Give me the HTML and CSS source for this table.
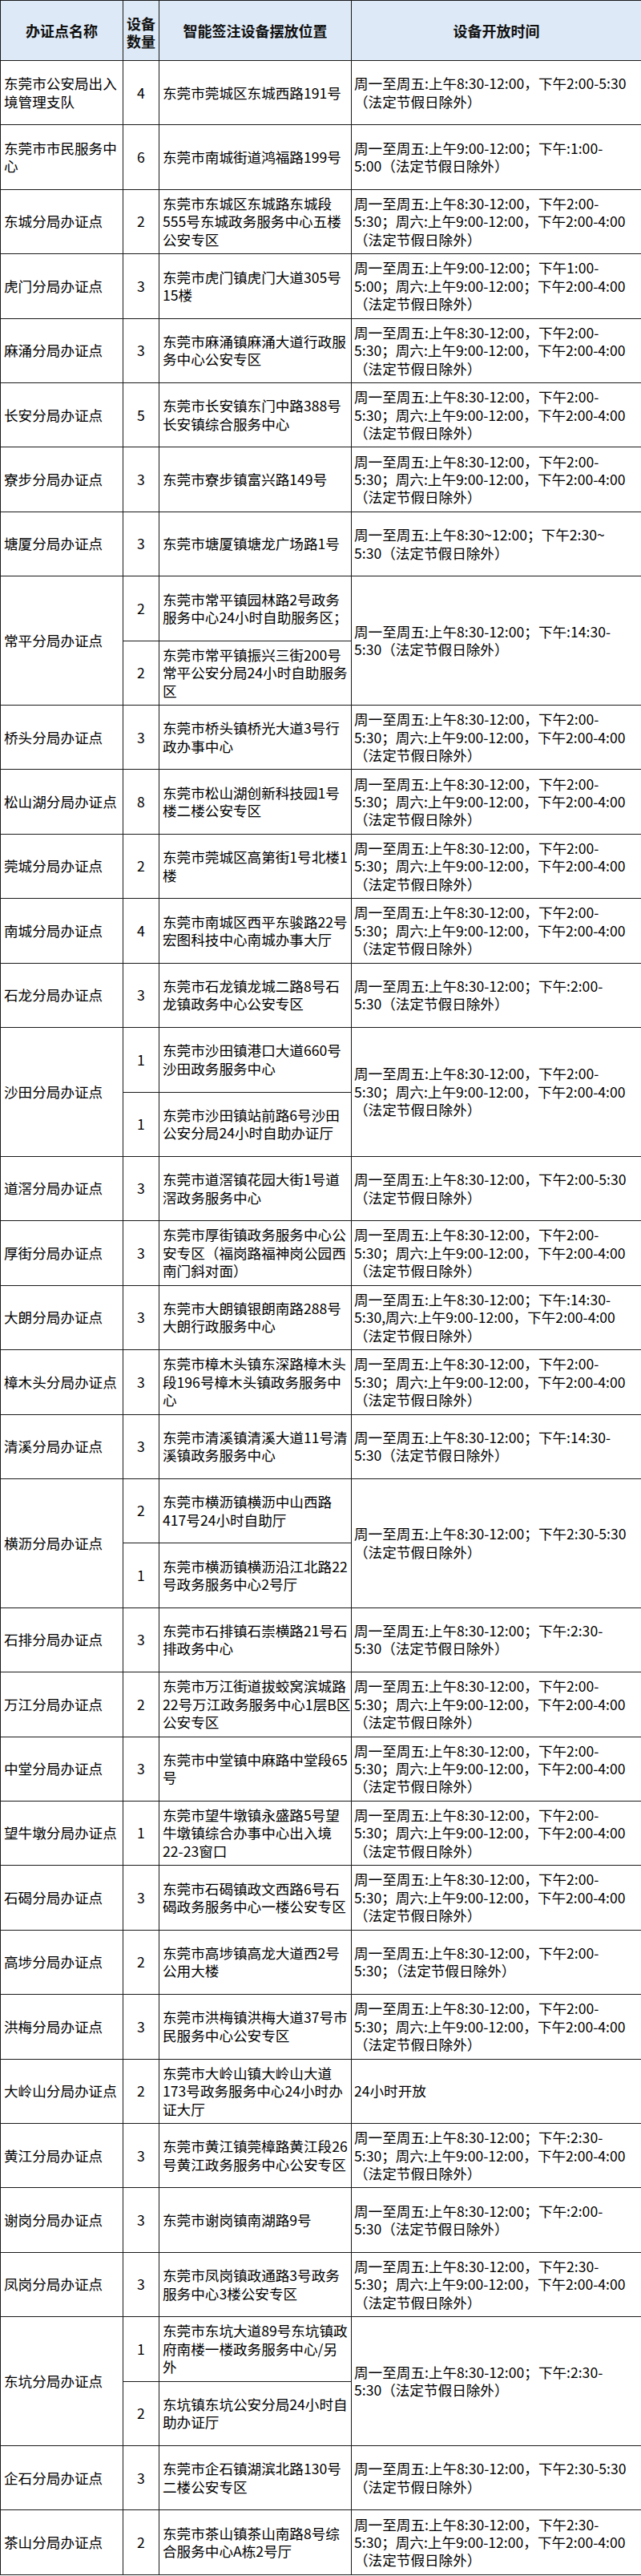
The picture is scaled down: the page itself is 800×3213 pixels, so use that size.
FILE: index.html
```html
<!DOCTYPE html>
<html lang="zh-CN">
<head>
<meta charset="utf-8">
<title>智能签注设备摆放位置</title>
<link rel="stylesheet" href="styles.css">
</head>
<body>
<table class="tbl">
<colgroup>
<col class="c1"><col class="c2"><col class="c3"><col class="c4">
</colgroup>
<thead>
<tr>
<th>办证点名称</th>
<th class="hnum">设备<br>数量</th>
<th>智能签注设备摆放位置</th>
<th>设备开放时间</th>
</tr>
</thead>
<tbody>
<tr><td class="name">东莞市公安局出入<br>境管理支队</td><td class="num">4</td><td class="addr">东莞市莞城区东城西路191号</td><td class="time">周一至周五:上午8:30-12:00，下午2:00-5:30<br>（法定节假日除外）</td></tr>
<tr><td class="name">东莞市市民服务中<br>心</td><td class="num">6</td><td class="addr">东莞市南城街道鸿福路199号</td><td class="time">周一至周五:上午9:00-12:00；下午:1:00-<br>5:00（法定节假日除外）</td></tr>
<tr><td class="name">东城分局办证点</td><td class="num">2</td><td class="addr">东莞市东城区东城路东城段<br>555号东城政务服务中心五楼<br>公安专区</td><td class="time">周一至周五:上午8:30-12:00，下午2:00-<br>5:30；周六:上午9:00-12:00，下午2:00-4:00<br>（法定节假日除外）</td></tr>
<tr><td class="name">虎门分局办证点</td><td class="num">3</td><td class="addr">东莞市虎门镇虎门大道305号<br>15楼</td><td class="time">周一至周五:上午9:00-12:00；下午1:00-<br>5:00；周六:上午9:00-12:00；下午2:00-4:00<br>（法定节假日除外）</td></tr>
<tr><td class="name">麻涌分局办证点</td><td class="num">3</td><td class="addr">东莞市麻涌镇麻涌大道行政服<br>务中心公安专区</td><td class="time">周一至周五:上午8:30-12:00，下午2:00-<br>5:30；周六:上午9:00-12:00，下午2:00-4:00<br>（法定节假日除外）</td></tr>
<tr><td class="name">长安分局办证点</td><td class="num">5</td><td class="addr">东莞市长安镇东门中路388号<br>长安镇综合服务中心</td><td class="time">周一至周五:上午8:30-12:00，下午2:00-<br>5:30；周六:上午9:00-12:00，下午2:00-4:00<br>（法定节假日除外）</td></tr>
<tr><td class="name">寮步分局办证点</td><td class="num">3</td><td class="addr">东莞市寮步镇富兴路149号</td><td class="time">周一至周五:上午8:30-12:00，下午2:00-<br>5:30；周六:上午9:00-12:00，下午2:00-4:00<br>（法定节假日除外）</td></tr>
<tr><td class="name">塘厦分局办证点</td><td class="num">3</td><td class="addr">东莞市塘厦镇塘龙广场路1号</td><td class="time">周一至周五:上午8:30~12:00；下午2:30~<br>5:30（法定节假日除外）</td></tr>
<tr><td class="name" rowspan="2">常平分局办证点</td><td class="num">2</td><td class="addr">东莞市常平镇园林路2号政务<br>服务中心24小时自助服务区；</td><td class="time" rowspan="2">周一至周五:上午8:30-12:00；下午:14:30-<br>5:30（法定节假日除外）</td></tr>
<tr><td class="num">2</td><td class="addr">东莞市常平镇振兴三街200号<br>常平公安分局24小时自助服务<br>区</td></tr>
<tr><td class="name">桥头分局办证点</td><td class="num">3</td><td class="addr">东莞市桥头镇桥光大道3号行<br>政办事中心</td><td class="time">周一至周五:上午8:30-12:00，下午2:00-<br>5:30；周六:上午9:00-12:00，下午2:00-4:00<br>（法定节假日除外）</td></tr>
<tr><td class="name">松山湖分局办证点</td><td class="num">8</td><td class="addr">东莞市松山湖创新科技园1号<br>楼二楼公安专区</td><td class="time">周一至周五:上午8:30-12:00，下午2:00-<br>5:30；周六:上午9:00-12:00，下午2:00-4:00<br>（法定节假日除外）</td></tr>
<tr><td class="name">莞城分局办证点</td><td class="num">2</td><td class="addr">东莞市莞城区高第街1号北楼1<br>楼</td><td class="time">周一至周五:上午8:30-12:00，下午2:00-<br>5:30；周六:上午9:00-12:00，下午2:00-4:00<br>（法定节假日除外）</td></tr>
<tr><td class="name">南城分局办证点</td><td class="num">4</td><td class="addr">东莞市南城区西平东骏路22号<br>宏图科技中心南城办事大厅</td><td class="time">周一至周五:上午8:30-12:00，下午2:00-<br>5:30；周六:上午9:00-12:00，下午2:00-4:00<br>（法定节假日除外）</td></tr>
<tr><td class="name">石龙分局办证点</td><td class="num">3</td><td class="addr">东莞市石龙镇龙城二路8号石<br>龙镇政务中心公安专区</td><td class="time">周一至周五:上午8:30-12:00；下午:2:00-<br>5:30（法定节假日除外）</td></tr>
<tr><td class="name" rowspan="2">沙田分局办证点</td><td class="num">1</td><td class="addr">东莞市沙田镇港口大道660号<br>沙田政务服务中心</td><td class="time" rowspan="2">周一至周五:上午8:30-12:00，下午2:00-<br>5:30；周六:上午9:00-12:00，下午2:00-4:00<br>（法定节假日除外）</td></tr>
<tr><td class="num">1</td><td class="addr">东莞市沙田镇站前路6号沙田<br>公安分局24小时自助办证厅</td></tr>
<tr><td class="name">道滘分局办证点</td><td class="num">3</td><td class="addr">东莞市道滘镇花园大街1号道<br>滘政务服务中心</td><td class="time">周一至周五:上午8:30-12:00，下午2:00-5:30<br>（法定节假日除外）</td></tr>
<tr><td class="name">厚街分局办证点</td><td class="num">3</td><td class="addr">东莞市厚街镇政务服务中心公<br>安专区（福岗路福神岗公园西<br>南门斜对面）</td><td class="time">周一至周五:上午8:30-12:00，下午2:00-<br>5:30；周六:上午9:00-12:00，下午2:00-4:00<br>（法定节假日除外）</td></tr>
<tr><td class="name">大朗分局办证点</td><td class="num">3</td><td class="addr">东莞市大朗镇银朗南路288号<br>大朗行政服务中心</td><td class="time">周一至周五:上午8:30-12:00；下午:14:30-<br>5:30,周六:上午9:00-12:00，下午2:00-4:00<br>（法定节假日除外）</td></tr>
<tr><td class="name">樟木头分局办证点</td><td class="num">3</td><td class="addr">东莞市樟木头镇东深路樟木头<br>段196号樟木头镇政务服务中<br>心</td><td class="time">周一至周五:上午8:30-12:00，下午2:00-<br>5:30；周六:上午9:00-12:00，下午2:00-4:00<br>（法定节假日除外）</td></tr>
<tr><td class="name">清溪分局办证点</td><td class="num">3</td><td class="addr">东莞市清溪镇清溪大道11号清<br>溪镇政务服务中心</td><td class="time">周一至周五:上午8:30-12:00；下午:14:30-<br>5:30（法定节假日除外）</td></tr>
<tr><td class="name" rowspan="2">横沥分局办证点</td><td class="num">2</td><td class="addr">东莞市横沥镇横沥中山西路<br>417号24小时自助厅</td><td class="time" rowspan="2">周一至周五:上午8:30-12:00；下午2:30-5:30<br>（法定节假日除外）</td></tr>
<tr><td class="num">1</td><td class="addr">东莞市横沥镇横沥沿江北路22<br>号政务服务中心2号厅</td></tr>
<tr><td class="name">石排分局办证点</td><td class="num">3</td><td class="addr">东莞市石排镇石崇横路21号石<br>排政务中心</td><td class="time">周一至周五:上午8:30-12:00；下午:2:30-<br>5:30（法定节假日除外）</td></tr>
<tr><td class="name">万江分局办证点</td><td class="num">2</td><td class="addr">东莞市万江街道拔蛟窝滨城路<br>22号万江政务服务中心1层B区<br>公安专区</td><td class="time">周一至周五:上午8:30-12:00，下午2:00-<br>5:30；周六:上午9:00-12:00，下午2:00-4:00<br>（法定节假日除外）</td></tr>
<tr><td class="name">中堂分局办证点</td><td class="num">3</td><td class="addr">东莞市中堂镇中麻路中堂段65<br>号</td><td class="time">周一至周五:上午8:30-12:00，下午2:00-<br>5:30；周六:上午9:00-12:00，下午2:00-4:00<br>（法定节假日除外）</td></tr>
<tr><td class="name">望牛墩分局办证点</td><td class="num">1</td><td class="addr">东莞市望牛墩镇永盛路5号望<br>牛墩镇综合办事中心出入境<br>22-23窗口</td><td class="time">周一至周五:上午8:30-12:00，下午2:00-<br>5:30；周六:上午9:00-12:00，下午2:00-4:00<br>（法定节假日除外）</td></tr>
<tr><td class="name">石碣分局办证点</td><td class="num">3</td><td class="addr">东莞市石碣镇政文西路6号石<br>碣政务服务中心一楼公安专区</td><td class="time">周一至周五:上午8:30-12:00，下午2:00-<br>5:30；周六:上午9:00-12:00，下午2:00-4:00<br>（法定节假日除外）</td></tr>
<tr><td class="name">高埗分局办证点</td><td class="num">2</td><td class="addr">东莞市高埗镇高龙大道西2号<br>公用大楼</td><td class="time">周一至周五:上午8:30-12:00，下午2:00-<br>5:30；（法定节假日除外）</td></tr>
<tr><td class="name">洪梅分局办证点</td><td class="num">3</td><td class="addr">东莞市洪梅镇洪梅大道37号市<br>民服务中心公安专区</td><td class="time">周一至周五:上午8:30-12:00，下午2:00-<br>5:30；周六:上午9:00-12:00，下午2:00-4:00<br>（法定节假日除外）</td></tr>
<tr><td class="name">大岭山分局办证点</td><td class="num">2</td><td class="addr">东莞市大岭山镇大岭山大道<br>173号政务服务中心24小时办<br>证大厅</td><td class="time">24小时开放</td></tr>
<tr><td class="name">黄江分局办证点</td><td class="num">3</td><td class="addr">东莞市黄江镇莞樟路黄江段26<br>号黄江政务服务中心公安专区</td><td class="time">周一至周五:上午8:30-12:00；下午:2:30-<br>5:30；周六:上午9:00-12:00，下午2:00-4:00<br>（法定节假日除外）</td></tr>
<tr><td class="name">谢岗分局办证点</td><td class="num">3</td><td class="addr">东莞市谢岗镇南湖路9号</td><td class="time">周一至周五:上午8:30-12:00；下午:2:00-<br>5:30（法定节假日除外）</td></tr>
<tr><td class="name">凤岗分局办证点</td><td class="num">3</td><td class="addr">东莞市凤岗镇政通路3号政务<br>服务中心3楼公安专区</td><td class="time">周一至周五:上午8:30-12:00，下午2:30-<br>5:30；周六:上午9:00-12:00，下午2:00-4:00<br>（法定节假日除外）</td></tr>
<tr><td class="name" rowspan="2">东坑分局办证点</td><td class="num">1</td><td class="addr">东莞市东坑大道89号东坑镇政<br>府南楼一楼政务服务中心/另<br>外</td><td class="time" rowspan="2">周一至周五:上午8:30-12:00；下午:2:30-<br>5:30（法定节假日除外）</td></tr>
<tr><td class="num">2</td><td class="addr">东坑镇东坑公安分局24小时自<br>助办证厅</td></tr>
<tr><td class="name">企石分局办证点</td><td class="num">3</td><td class="addr">东莞市企石镇湖滨北路130号<br>二楼公安专区</td><td class="time">周一至周五:上午8:30-12:00，下午2:30-5:30<br>（法定节假日除外）</td></tr>
<tr><td class="name">茶山分局办证点</td><td class="num">2</td><td class="addr">东莞市茶山镇茶山南路8号综<br>合服务中心A栋2号厅</td><td class="time">周一至周五:上午8:30-12:00，下午2:30-<br>5:30；周六:上午9:00-12:00，下午2:00-4:00<br>（法定节假日除外）</td></tr>
</tbody>
</table>
</body>
</html>
```
FILE: styles.css
```css
html, body {
  margin: 0;
  padding: 0;
  background: #ffffff;
}

.tbl {
  width: 800px;
  border-collapse: collapse;
  table-layout: fixed;
  font-family: "Liberation Sans Narrow", "Noto Sans CJK SC", sans-serif;
  font-size: 17.6px;
  line-height: 22.4px;
  color: #000000;
}

.c1 { width: 153px; }
.c2 { width: 45px; }
.c3 { width: 240px; }
.c4 { width: 362px; }

.tbl th,
.tbl td {
  border: 1px solid #1a1a1a;
  padding: 0 2px 0 4px;
  vertical-align: middle;
  white-space: nowrap;
  overflow: hidden;
}

.tbl thead tr {
  height: 75px;
}

.tbl th {
  background: #dde9f6;
  font-family: "Noto Sans CJK SC", sans-serif;
  font-weight: bold;
  font-size: 18px;
  text-align: center;
  color: #111111;
  padding: 0;
}

.tbl .hnum {
  line-height: 22.5px;
  padding-top: 4px;
}

.tbl tbody tr {
  height: 80.41px;
}

.tbl .name {
  padding-left: 4px;
  text-align: left;
}

.tbl .num {
  text-align: center;
  padding: 0;
}

.tbl .addr {
  padding-left: 4px;
}

.tbl .time {
  padding-left: 3px;
}
```
